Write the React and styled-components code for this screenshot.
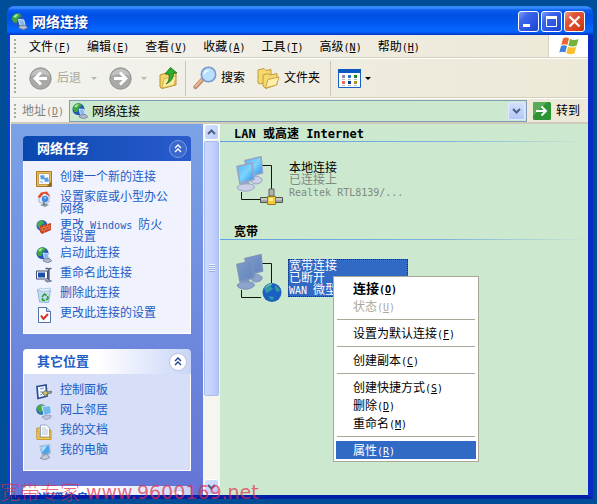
import React from "react";
import styled, { createGlobalStyle, css } from "styled-components";

const Global = createGlobalStyle`
  * { box-sizing: border-box; }
  body {
    margin: 0;
    background: #004e98;
    font: 12px/12px "Liberation Sans", "Noto Sans CJK SC", sans-serif;
    color: #000;
  }
  button, input { font: inherit; color: inherit; }
`;

/* ---------- text ---------- */

const Latin = styled.span`
  font-family: "DejaVu Sans Mono", "Liberation Mono", monospace;
  font-size: ${(p) => (p.$wide ? 12 : 10)}px;
  line-height: 0;
  white-space: pre-wrap;
`;

function Text({ children, wide }) {
  return children
    .split(/([\x20-\x7e]+)/)
    .filter(Boolean)
    .map((s, i) => (/^[\x20-\x7e]/.test(s) ? <Latin key={i} $wide={wide}>{s}</Latin> : <span key={i}>{s}</span>));
}

function Mnemonic({ text, letter }) {
  return (
    <span>
      {text}
      <Latin>
        (<u>{letter}</u>)
      </Latin>
    </span>
  );
}

/* ---------- window frame ---------- */

const Desktop = styled.div`
  height: 100vh;
  position: relative;
  padding: 6px 4px 5px 7px;
  display: flex;
  overflow: hidden;
`;

const Window = styled.main`
  flex: 1;
  min-width: 0;
  display: flex;
  flex-direction: column;
  border: solid;
  border-color: #0a3ce0 #0a2cc4 #001fa8 #0a3ce0;
  border-width: 0 5px 4px 3px;
  border-radius: 7px 7px 0 0;
  background: #0a3ce0;
`;

const TitleBar = styled.header`
  height: 29px;
  flex: none;
  display: flex;
  align-items: center;
  gap: 4px;
  margin: 0 -5px 0 -3px;
  padding: 2px 8px 0 4px;
  border-radius: 7px 7px 0 0;
  background: linear-gradient(#2f86f5 0, #3a8cff 2px, #0a5ff0 4px, #0050e4 9px, #0056ee 16px, #0566fe 24px, #0560f6 26px, #0034c8 29px);
`;

const Title = styled.h1`
  flex: 1;
  margin: 0;
  font-size: 14px;
  line-height: 16px;
  font-weight: 700;
  color: #fff;
  text-shadow: 1px 1px #0a2f9c;
`;

const CaptionButtons = styled.div`
  display: flex;
  gap: 2px;
`;

const CaptionButton = styled.button`
  width: 21px;
  height: 21px;
  padding: 0;
  border: 1px solid #fff;
  border-radius: 3px;
  display: grid;
  place-items: center;
  background: ${(p) =>
    p.$close
      ? "linear-gradient(135deg, #f0a088 0, #e0583a 30%, #d8401c 75%, #b83010)"
      : "linear-gradient(135deg, #7c9ef8 0, #3d66ea 30%, #2450dc 75%, #1a48c8)"};
`;

const Client = styled.div`
  flex: 1;
  min-height: 0;
  display: flex;
  flex-direction: column;
  background: #efece0;
  border-left: 1px solid #f6f5ef;
`;

/* ---------- bars ---------- */

const Bar = styled.div`
  flex: none;
  display: flex;
  align-items: center;
  padding-left: 3px;
  background: linear-gradient(90deg, #f3f3f0, #eeebdd 70%, #ece9d8);
  border-bottom: 1px solid #d5d1bf;
`;

const MenuBar = styled(Bar)`
  height: 23px;
`;

const ToolBar = styled(Bar)`
  height: 40px;
  border-top: 1px solid #fff;
`;

const AddressBar = styled(Bar)`
  height: 26px;
  border-top: 1px solid #fff;
  border-bottom: 2px solid #cfcbb8;
  padding-right: 8px;
`;

const Grip = styled.span`
  width: 2px;
  height: ${(p) => p.$h}px;
  margin-right: ${(p) => p.$after}px;
  flex: none;
  background: repeating-linear-gradient(#aeab9a 0, #aeab9a 2px, transparent 2px, transparent 4px);
`;

const MenuList = styled.nav`
  display: flex;
  gap: 16px;
  flex: 1;
  min-width: 0;
  padding-top: 2px;
`;

const flatButton = css`
  border: 0;
  padding: 0;
  background: none;
  white-space: nowrap;
  line-height: 14px;
`;

const MenuButton = styled.button`
  ${flatButton}
`;

const FlagBox = styled.div`
  width: 40px;
  align-self: stretch;
  display: grid;
  place-items: center;
  background: #fff;
  border-left: 1px solid #d5d1bf;
`;

const ToolButton = styled.button`
  ${flatButton}
  display: flex;
  align-items: center;
  gap: ${(p) => p.$gap || 4}px;
  margin-right: ${(p) => p.$after || 0}px;
  color: ${(p) => (p.disabled ? "#a9a798" : "#000")};
`;

const Caret = styled.span`
  border: solid transparent;
  border-top-color: ${(p) => (p.$dim ? "#bab8aa" : "#000")};
  border-width: 3px 3px 0;
`;

const ToolSeparator = styled.span`
  width: 1px;
  height: 35px;
  background: #cbc8b8;
  margin-right: 7px;
`;

const AddressLabel = styled.label`
  color: #858378;
  margin-right: 5px;
  white-space: nowrap;
`;

const AddressField = styled.div`
  flex: 1;
  min-width: 0;
  height: 22px;
  display: flex;
  align-items: center;
  padding: 1px 1px 1px 2px;
  gap: 4px;
  border: 1px solid #7f9db9;
  background: #cce8cf;
`;

const AddressInput = styled.input`
  flex: 1;
  min-width: 0;
  border: 0;
  padding: 0;
  outline: 0;
  background: transparent;
`;

const DropButton = styled.button`
  width: 17px;
  align-self: stretch;
  padding: 0;
  display: grid;
  place-items: center;
  border: 1px solid #dfe8fd;
  border-radius: 2px;
  background: linear-gradient(#d2defe, #b4c8f6);
`;

const GoButton = styled.button`
  ${flatButton}
  display: flex;
  align-items: center;
  gap: 5px;
  margin-left: 6px;
`;

/* ---------- task pane ---------- */

const Body = styled.div`
  flex: 1;
  min-height: 0;
  display: grid;
  grid-template-columns: 192px 17px minmax(0, 1fr);
`;

const TaskPane = styled.aside`
  min-height: 0;
  overflow: hidden;
  display: flex;
  flex-direction: column;
  gap: 15px;
  padding: 12px 12px 0;
  background: linear-gradient(#7ba2e7, #6375d6);
`;

const Group = styled.section`
  flex: none;
`;

const GroupHeader = styled.h2`
  margin: 0;
  height: 25px;
  padding: 0 4px 0 14px;
  display: flex;
  align-items: center;
  justify-content: space-between;
  border-radius: 4px 4px 0 0;
  font-size: 13px;
  font-weight: 700;
  color: ${(p) => (p.$primary ? "#fff" : "#215dc6")};
  background: ${(p) =>
    p.$primary ? "linear-gradient(90deg, #0a48b0, #2a5bcc)" : "linear-gradient(90deg, #fff 45%, #c9d5f8)"};
`;

const Chevron = styled.button`
  width: 18px;
  height: 18px;
  padding: 0;
  display: grid;
  place-items: center;
  border-radius: 50%;
  border: 1px solid ${(p) => (p.$primary ? "#7c9ce4" : "#b9c4e0")};
  background: ${(p) => (p.$primary ? "#3a68cd" : "#fff")};
  color: ${(p) => (p.$primary ? "#fff" : "#1c3f94")};
`;

const TaskList = styled.ul`
  list-style: none;
  margin: 0;
  padding: 10px 12px;
  display: flex;
  flex-direction: column;
  gap: 4px;
  border: 1px solid #fff;
  border-top: 0;
  background: ${(p) => (p.$primary ? "#f0f3fd" : "#d6dff7")};
`;

const TaskLink = styled.a`
  display: flex;
  align-items: flex-start;
  gap: 8px;
  color: #215dc6;
  text-decoration: none;
  line-height: 12px;
  svg { flex: none; }
  > span { max-width: 112px; }
`;

/* ---------- scroll bar ---------- */

const Scroll = styled.div`
  display: flex;
  flex-direction: column;
  padding: 0 1px;
  background: #f6f6f0;
`;

const ScrollButton = styled.button`
  height: 16px;
  padding: 0;
  display: grid;
  place-items: center;
  border: 1px solid #fff;
  border-radius: 3px;
  background: linear-gradient(135deg, #d6e1fe, #b9cbf8);
`;

const Thumb = styled.div`
  flex: 254;
  margin-top: 1px;
  display: grid;
  place-items: center;
  border: 1px solid #a9bdf0;
  border-radius: 2px;
  background: linear-gradient(90deg, #ccd8fc, #c3d1fb 60%, #b4c5f4);
`;

const ThumbGrip = styled.span`
  width: 6px;
  height: 8px;
  background: repeating-linear-gradient(#eef3ff 0, #eef3ff 1px, #93aee6 1px, #93aee6 2px);
`;

const Track = styled.div`
  flex: 84;
`;

/* ---------- folder view ---------- */

const Folder = styled.section`
  position: relative;
  min-width: 0;
  background: #cce8cf;
`;

const Category = styled.section`
  height: 98px;
`;

const CategoryTitle = styled.h2`
  margin: 0;
  height: 18px;
  padding: 1px 0 0 14px;
  display: flex;
  align-items: center;
  font-size: 12px;
  font-weight: 700;
  background: linear-gradient(90deg, #5f9fe8, #7cb2dc 60%, #cce8cf) bottom / 100% 1px no-repeat;
`;

const Connection = styled.article`
  display: flex;
  align-items: flex-start;
  gap: 4px;
  padding: 14px 0 0 16px;
`;

const Details = styled.div`
  width: 120px;
  margin-top: 5px;
  border: 1px dotted ${(p) => (p.$selected ? "#14336e" : "transparent")};
  background: ${(p) => (p.$selected ? "#316ac5" : "transparent")};
  color: ${(p) => (p.$selected ? "#fff" : "#808a80")};
`;

const Line = styled.p`
  margin: 0;
  height: 12px;
  white-space: nowrap;
  color: ${(p) => (p.$strong ? "#000" : "inherit")};
`;

const ContextMenu = styled.div`
  position: absolute;
  left: 113px;
  top: 152px;
  width: 146px;
  padding: 2px;
  border: 1px solid #aca899;
  background: #fff;
`;

const ContextItem = styled.button`
  ${flatButton}
  display: block;
  width: 100%;
  height: 18px;
  padding: 1px 0 0 17px;
  text-align: left;
  font-weight: ${(p) => (p.$default ? 700 : 400)};
  font-size: ${(p) => (p.$default ? 13 : 12)}px;
  color: ${(p) => (p.disabled ? "#aca899" : p.$active ? "#fff" : "#000")};
  background: ${(p) => (p.$active ? "#316ac5" : "none")};
`;

const ContextRule = styled.hr`
  margin: 4px 1px;
  border: 0;
  height: 1px;
  background: #aca899;
`;

const Watermark = styled.div`
  position: absolute;
  left: 0;
  bottom: 0;
  display: flex;
  gap: 6px;
  font-family: "DejaVu Sans", "Noto Sans CJK SC", sans-serif;
  font-size: 19px;
  line-height: 24px;
  color: rgba(224, 44, 72, 0.7);
  pointer-events: none;
  white-space: nowrap;
`;

const WatermarkName = styled.span`
  font-family: "Noto Sans CJK SC", sans-serif;
  font-size: 20px;
  font-weight: 300;
`;

/* ---------- drawings ---------- */

const Svg = ({ s = 16, w, h, box = 16, children }) => (
  <svg width={w || s} height={h || s} viewBox={w && h ? `0 0 ${w} ${h}` : `0 0 ${box} ${box}`} aria-hidden="true">
    {children}
  </svg>
);

const GlobeConn = ({ s }) => (
  <Svg s={s}>
    <circle cx="6.500" cy="6.200" r="6" fill="#2458b4" />
    <path d="M.8 5.500C1.500 1 5 0 8.500 .8L9.500 3 6.500 5 5.500 9 2.500 9z" fill="#3ca840" />
    <path d="M2 3.500Q4 .8 7 1L4.500 4.500z" fill="#b4eaa0" />
    <path d="M7 6l5 .5 1.500 6-5-1z" fill="#84b8f0" stroke="#dce8fa" strokeWidth=".9" />
    <path d="M8 12l5.500-.5 2.200 2.500-4 1.800-4.500-1.800z" fill="#b0bccc" stroke="#5c6c8c" strokeWidth=".7" />
  </Svg>
);

const WizardIcon = () => (
  <Svg>
    <path d="M.5.5h15v15H.5z" fill="#e8c060" stroke="#a87820" />
    <path d="M2.500 2.500h11v11h-11z" fill="#f6f8ff" stroke="#b89040" strokeWidth=".8" />
    <path d="M4 4.500l4-.5 1 4-4 .5zM8 7l4-.5 1 4-4 .5z" fill="#58a0e4" />
    <path d="M4 10.500l3 1" stroke="#7fb4ea" />
    <path d="M10.500 15.500l5 0 0-5z" fill="#8c6420" />
  </Svg>
);

const HomeNetIcon = () => (
  <Svg>
    <path d="M3 6L8 1l5 4v6l-4 2-6-2z" fill="#e8eef8" stroke="#8494b4" strokeWidth=".7" />
    <path d="M1.500 6L5 1.500 11 .5l3.500 5-3-1.500L8 2.500 4 7z" fill="#e0502c" />
    <circle cx="9" cy="8" r="3.200" fill="#3f8ae0" />
    <path d="M7.500 7l2-1 .5 2z" fill="#c8ecff" />
    <path d="M4 14q5-3 9 0l-4 2z" fill="#8c97ac" />
    <path d="M8 11v3" stroke="#6c7890" strokeWidth="1.500" />
  </Svg>
);

const FirewallIcon = () => (
  <Svg>
    <circle cx="6" cy="6.500" r="5.500" fill="#2a66b4" />
    <path d="M1 6q1-4 5-5l2 3-3 2-1 4z" fill="#46b050" />
    <path d="M4 7l11-3v7L6 15l-2-2z" fill="#c8401c" />
    <path d="M4 9.500L15 6.500M5 12l10-3M8 6v3M11.500 5v2.500M6.500 9v3M10 8v3M13 7v2.500M8.500 11.500v2.500" stroke="#f4a078" strokeWidth=".6" />
  </Svg>
);

const RenameIcon = () => (
  <Svg>
    <path d="M.5 4h11v8H.5z" fill="#fff" stroke="#3c4a6c" />
    <path d="M2 5.500h7v5H2z" fill="#1c4cac" />
    <path d="M9.500 1.500h2q1 0 1 1v10.500q0 1-1 1h-2M15.500 1.500h-1.500q-1 0-1 1v10.500q0 1 1 1h1.500" stroke="#50607c" fill="none" strokeWidth="1.400" />
    <path d="M8 13h6l-2 3z" fill="#8894ac" />
  </Svg>
);

const RecycleIcon = () => (
  <Svg>
    <path d="M1.500 3l2 12 9 .5L14.500 3z" fill="#c4dcf2" stroke="#82a8cc" strokeWidth=".8" />
    <path d="M1 3q4-3 7-1l6-1 .5 2.500q-7 2-13.500-.5z" fill="#eef7ff" stroke="#90b4d8" strokeWidth=".7" />
    <path d="M6 10l2.500-3 2 1.500M11.500 9l.5 2.500-2 1.500M9 13.500l-2.500-.5V11" stroke="#26a034" strokeWidth="1.600" fill="none" />
  </Svg>
);

const SettingsIcon = () => (
  <Svg>
    <path d="M2.500.5h8l4 4v11h-12z" fill="#fafcff" stroke="#5472a8" />
    <path d="M10.500.5v4h4" fill="#c4d6f2" stroke="#5472a8" />
    <path d="M5 8.500l2.500 3.500 4.500-5" stroke="#d83028" strokeWidth="2" fill="none" />
  </Svg>
);

const ControlPanelIcon = () => (
  <Svg>
    <path d="M1 2.500l9-1.500 1 11L2 14.500z" fill="#f4f8ff" stroke="#2c4c98" strokeWidth="1.700" />
    <path d="M4 5l4-1M4 8h3M4 11l2-.5" stroke="#6c98dc" />
    <path d="M6 9l4-3 1 2 4.500-1v2l-4.500 1-1 3z" fill="#98a49c" stroke="#5c6450" strokeWidth=".7" />
    <path d="M8 8.500l2-1 1 2-2 1.500z" fill="#f0c840" />
  </Svg>
);

const NetPlacesIcon = () => (
  <Svg>
    <circle cx="5.500" cy="5.500" r="5.300" fill="#2a70b4" />
    <path d="M.5 4Q3-.5 8 1L7 6 4 9z" fill="#46ac44" />
    <path d="M6 2.500l8.500-1 1 8-7.500 2z" fill="#70b8f0" stroke="#e4f0ff" strokeWidth=".9" />
    <path d="M6 13q4-3 9-1.500l0 2-5 2.300z" fill="#c0c4d4" stroke="#7c84a0" strokeWidth=".6" />
  </Svg>
);

const DocumentsIcon = () => (
  <Svg>
    <path d="M.8 4h5l1 2H15v9.500H1z" fill="#f0c648" stroke="#b48820" strokeWidth=".8" />
    <path d="M4.500 1h6l3 3v9h-9z" fill="#fff" stroke="#8498bc" strokeWidth=".8" />
    <path d="M6 4h4M6 6h6M6 8h6M6 10h6" stroke="#9cb4d8" strokeWidth=".8" />
    <path d="M.8 7h2l.5 6.500H15v2H1z" fill="#f4cc58" stroke="#b48820" strokeWidth=".5" />
  </Svg>
);

const ComputerIcon = () => (
  <Svg>
    <path d="M4 2l9.500-1.300 1 8.800-8.500 2z" fill="#50a4e8" stroke="#b4c4dc" strokeWidth="1.300" />
    <path d="M5 3l6-1-4.500 6z" fill="#b4e2ff" />
    <path d="M8 11l4-1 0 2 2 1.500-5 2.300-5-1.500z" fill="#c4c8d4" stroke="#747c98" strokeWidth=".7" />
  </Svg>
);

const NavArrow = ({ back }) => (
  <Svg s={23} box={23}>
    <circle cx="11.500" cy="11.500" r="10.700" fill="#a9a9a7" stroke="#92928e" />
    <path d="M2 9a10 10 0 0 1 19 0q-9-4-19 0z" fill="#c2c2c0" />
    <g transform={back ? undefined : "rotate(180 11.500 11.500)"}>
      <path d="M18 11.500H7M12 5.500l-6 6 6 6" stroke="#fff" strokeWidth="2.800" fill="none" />
    </g>
  </Svg>
);

const UpFolder = () => (
  <Svg w={19} h={22}>
    <path d="M1 8l6-2 2 2 8-2v12L3 21.500 1 20z" fill="#f4d468" stroke="#b8922c" />
    <path d="M3 21L5 12l12-3-2 9z" fill="#fdeb9c" stroke="#c8a43c" strokeWidth=".7" />
    <path d="M7 17q4-3 3-10H6l5.500-6.500L18 6h-3.500q0 8-7.500 11z" fill="#2eac30" stroke="#14701c" strokeWidth=".8" />
  </Svg>
);

const SearchIcon = () => (
  <Svg w={24} h={24}>
    <path d="M9.500 13.500L2.500 21" stroke="#b88870" strokeWidth="4.200" strokeLinecap="round" />
    <path d="M9 13.500L2.500 20.500" stroke="#f0b484" strokeWidth="2" strokeLinecap="round" />
    <circle cx="15.500" cy="8.500" r="7.200" fill="#b8e0fc" stroke="#7c98d0" strokeWidth="1.600" />
    <path d="M10.500 9.500q0-6 7-6-5 2-7 6z" fill="#fff" />
  </Svg>
);

const FoldersIcon = () => (
  <Svg w={23} h={21}>
    <path d="M1 2l6-1.500L9 2.500l5-1v11L3 16 1 15z" fill="#f6d870" stroke="#c09c38" />
    <path d="M6 7l5-1.500 2 1.500 7-1.500v11L9 20.500 6 18z" fill="#f6d870" stroke="#c09c38" />
    <path d="M8.500 20L11 11.500 22 9l-2.500 8z" fill="#fef0ac" stroke="#c8a43c" />
  </Svg>
);

const ViewsIcon = () => (
  <Svg w={23} h={19}>
    <path d="M.5.5h22v18H.5z" fill="#fff" stroke="#1660c4" />
    <path d="M0 0h23v4H0z" fill="#0c58c0" />
    <path d="M4 6h3v3H4z" fill="#8c8cac" /><path d="M10 6h3v3h-3z" fill="#2c78c8" /><path d="M16 6h3v3h-3z" fill="#208428" />
    <path d="M4 12h3v3H4z" fill="#e86c58" /><path d="M10 12h3v3h-3z" fill="#103c90" /><path d="M16 12h3v3h-3z" fill="#b09428" />
    <path d="M4 10.500h3M10 10.500h3M16 10.500h3M4 16.500h3M10 16.500h3M16 16.500h3" stroke="#b8bcc8" />
  </Svg>
);

const Flag = () => (
  <Svg w={20} h={18}>
    <path d="M4 1.500Q7-.5 10 1.500L8.300 8Q5.500 6.500 2.300 8z" fill="#ee6430" />
    <path d="M11 2Q15 4 19.500 2L17.700 8.500Q13.500 10.500 9.300 8.500z" fill="#74b43c" />
    <path d="M2 9Q5 7.500 8 9L6.300 15.500Q3.500 14 .3 15.500z" fill="#4080dc" />
    <path d="M9 9.700Q13 11.500 17.300 9.700L15.700 16Q11.500 18.500 7.300 16z" fill="#f8c02c" />
  </Svg>
);

const GoIcon = () => (
  <Svg s={18} box={18}>
    <rect width="18" height="18" rx="1.500" fill="#2c9434" />
    <path d="M0 14L14 0H1.500Q0 0 0 1.500z" fill="#58ac58" />
    <path d="M3 9h10M8.500 4.500L13 9l-4.500 4.500" stroke="#fff" strokeWidth="2" fill="none" />
  </Svg>
);

const Arrow = ({ down }) => (
  <svg width="9" height="6" viewBox="0 0 9 6" aria-hidden="true">
    <path d={down ? "M1 1l3.500 3.500L8 1" : "M1 5l3.500-3.500L8 5"} stroke="#4d6185" strokeWidth="2" fill="none" />
  </svg>
);

const DoubleUp = () => (
  <svg width="8" height="9" viewBox="0 0 8 9" aria-hidden="true">
    <path d="M1 4l3-3 3 3M1 8l3-3 3 3" stroke="currentColor" strokeWidth="1.400" fill="none" />
  </svg>
);

function ConnectionIcon({ offline }) {
  const screen = offline ? "url(#off)" : "url(#on)";
  const edge = offline ? "#7c94bc" : "#98a4c4";
  const foot = offline ? "#8ca4cc" : "#ccd0e6";
  return (
    <svg width="48" height="50" viewBox="0 0 48 50" aria-hidden="true">
      <defs>
        <linearGradient id="on" x2="1" y2="1"><stop stopColor="#58b0f4" /><stop offset=".5" stopColor="#7cd4fe" /><stop offset="1" stopColor="#2a84e4" /></linearGradient>
        <linearGradient id="off" x2="1" y2="1"><stop stopColor="#7c9ccc" /><stop offset="1" stopColor="#6484bc" /></linearGradient>
      </defs>
      <path d="M26 9.500H35.500V34M5.500 36V43.500H25" stroke="#101810" fill="none" />
      <path d="M14 22q7-4 12 1 1 4-6 5-6-1-6-6z" fill={foot} stroke={edge} />
      <path d="M9 4.500L25 .8 26.500 17 13 21z" fill={screen} stroke={edge} strokeWidth="1.600" />
      <path d="M6 25h7l1 5H7z" fill={edge} />
      <path d="M1 31q4-4 13-3 6 1 4 4-4 4-11 3-6-1-6-4z" fill={foot} stroke={edge} />
      <path d="M1 10.500L16 7 18 23.500 4 27.500z" fill={screen} stroke={edge} strokeWidth="1.600" />
      {offline ? (
        <g>
          <circle cx="36" cy="38.500" r="9.500" fill="#1a60c0" />
          <path d="M28 34q3-5 8-5l-1 4 2 2-4 3-3 1zM39 31q4 2 5 6l-3 1-2-3zM33 42l5 1-1 3-3-1z" fill="#3498a4" />
          <path d="M29 35q3-6 8-5-5 1-8 5z" fill="#a4d8e8" opacity=".7" />
        </g>
      ) : (
        <g>
          <path d="M33 33h5v7h-5z" fill="#b0b4b0" stroke="#606460" />
          <path d="M24.500 41.500h22v5h-22z" fill="#a4a8a4" stroke="#505450" />
          <path d="M25 43h21" stroke="#e8e8e0" />
          <path d="M31.500 40.500h8v8h-8z" fill="#f4c838" stroke="#9c7c18" />
          <path d="M33 42h4v3h-4z" fill="#fff09c" />
        </g>
      )}
    </svg>
  );
}

/* ---------- data ---------- */

const menus = [["文件", "F"], ["编辑", "E"], ["查看", "V"], ["收藏", "A"], ["工具", "T"], ["高级", "N"], ["帮助", "H"]];

const tasks = [
  [WizardIcon, "创建一个新的连接"],
  [HomeNetIcon, "设置家庭或小型办公网络"],
  [FirewallIcon, "更改 Windows 防火墙设置"],
  [GlobeConn, "启动此连接"],
  [RenameIcon, "重命名此连接"],
  [RecycleIcon, "删除此连接"],
  [SettingsIcon, "更改此连接的设置"],
];

const places = [
  [ControlPanelIcon, "控制面板"],
  [NetPlacesIcon, "网上邻居"],
  [DocumentsIcon, "我的文档"],
  [ComputerIcon, "我的电脑"],
];

const contextItems = [
  ["连接", "O", "default"],
  ["状态", "U", "disabled"],
  null,
  ["设置为默认连接", "F"],
  null,
  ["创建副本", "C"],
  null,
  ["创建快捷方式", "S"],
  ["删除", "D"],
  ["重命名", "M"],
  null,
  ["属性", "R", "active"],
];

function TaskGroup({ title, items, primary }) {
  return (
    <Group>
      <GroupHeader $primary={primary}>
        {title}
        <Chevron $primary={primary} aria-label={title}><DoubleUp /></Chevron>
      </GroupHeader>
      <TaskList $primary={primary}>
        {items.map(([Icon, label]) => (
          <li key={label}>
            <TaskLink href="#"><Icon /><span><Text>{label}</Text></span></TaskLink>
          </li>
        ))}
      </TaskList>
    </Group>
  );
}

export default function App() {
  return (
    <Desktop>
      <Global />
      <Window>
        <TitleBar>
          <GlobeConn s={17} />
          <Title>网络连接</Title>
          <CaptionButtons>
            <CaptionButton aria-label="最小化"><Svg s={19} box={19}><path d="M4 12h7v3H4z" fill="#fff" /></Svg></CaptionButton>
            <CaptionButton aria-label="最大化"><Svg s={19} box={19}><path d="M4.500 5.500h10v9h-10z" stroke="#fff" fill="none" /><path d="M4 4h11v3H4z" fill="#fff" /></Svg></CaptionButton>
            <CaptionButton $close aria-label="关闭"><Svg s={19} box={19}><path d="M4.500 4.500l10 10M14.500 4.500l-10 10" stroke="#fff" strokeWidth="2.200" /></Svg></CaptionButton>
          </CaptionButtons>
        </TitleBar>
        <Client>
          <MenuBar>
            <Grip $h={14} $after={13} />
            <MenuList>
              {menus.map(([t, l]) => <MenuButton key={l}><Mnemonic text={t} letter={l} /></MenuButton>)}
            </MenuList>
            <FlagBox><Flag /></FlagBox>
          </MenuBar>
          <ToolBar>
            <Grip $h={30} $after={13} />
            <ToolButton disabled $gap={5} $after={10}><NavArrow back />后退</ToolButton>
            <ToolButton disabled $after={12} aria-label="后退列表"><Caret $dim /></ToolButton>
            <ToolButton disabled $after={9} aria-label="前进"><NavArrow /></ToolButton>
            <ToolButton disabled $after={12} aria-label="前进列表"><Caret $dim /></ToolButton>
            <ToolButton $after={7} aria-label="向上"><UpFolder /></ToolButton>
            <ToolSeparator />
            <ToolButton $after={12}><SearchIcon />搜索</ToolButton>
            <ToolButton $after={10}><FoldersIcon />文件夹</ToolButton>
            <ToolSeparator />
            <ToolButton aria-label="查看"><ViewsIcon /><Caret /></ToolButton>
          </ToolBar>
          <AddressBar>
            <Grip $h={14} $after={6} />
            <AddressLabel htmlFor="address"><Mnemonic text="地址" letter="D" /></AddressLabel>
            <AddressField>
              <GlobeConn s={16} />
              <AddressInput id="address" defaultValue="网络连接" />
              <DropButton aria-label="展开"><Arrow down /></DropButton>
            </AddressField>
            <GoButton><GoIcon />转到</GoButton>
          </AddressBar>
          <Body>
            <TaskPane>
              <TaskGroup primary title="网络任务" items={tasks} />
              <TaskGroup title="其它位置" items={places} />
              <TaskGroup title="详细信息" items={[]} />
            </TaskPane>
            <Scroll>
              <ScrollButton aria-label="向上滚动"><Arrow /></ScrollButton>
              <Thumb><ThumbGrip /></Thumb>
              <Track />
              <ScrollButton aria-label="向下滚动"><Arrow down /></ScrollButton>
            </Scroll>
            <Folder>
              <Category>
                <CategoryTitle><span><Text wide>LAN 或高速 Internet</Text></span></CategoryTitle>
                <Connection>
                  <ConnectionIcon />
                  <Details>
                    <Line $strong>本地连接</Line>
                    <Line>已连接上</Line>
                    <Line><Text>Realtek RTL8139/...</Text></Line>
                  </Details>
                </Connection>
              </Category>
              <Category>
                <CategoryTitle>宽带</CategoryTitle>
                <Connection>
                  <ConnectionIcon offline />
                  <Details $selected>
                    <Line>宽带连接</Line>
                    <Line>已断开</Line>
                    <Line><Text>WAN 微型</Text></Line>
                  </Details>
                </Connection>
              </Category>
              <ContextMenu role="menu">
                {contextItems.map((item, i) =>
                  item ? (
                    <ContextItem
                      key={i}
                      role="menuitem"
                      disabled={item[2] === "disabled"}
                      $default={item[2] === "default"}
                      $active={item[2] === "active"}
                    >
                      <Mnemonic text={item[0]} letter={item[1]} />
                    </ContextItem>
                  ) : (
                    <ContextRule key={i} />
                  )
                )}
              </ContextMenu>
            </Folder>
          </Body>
        </Client>
      </Window>
      <Watermark><WatermarkName>宽带专家</WatermarkName><span>www.9600169.net</span></Watermark>
    </Desktop>
  );
}
